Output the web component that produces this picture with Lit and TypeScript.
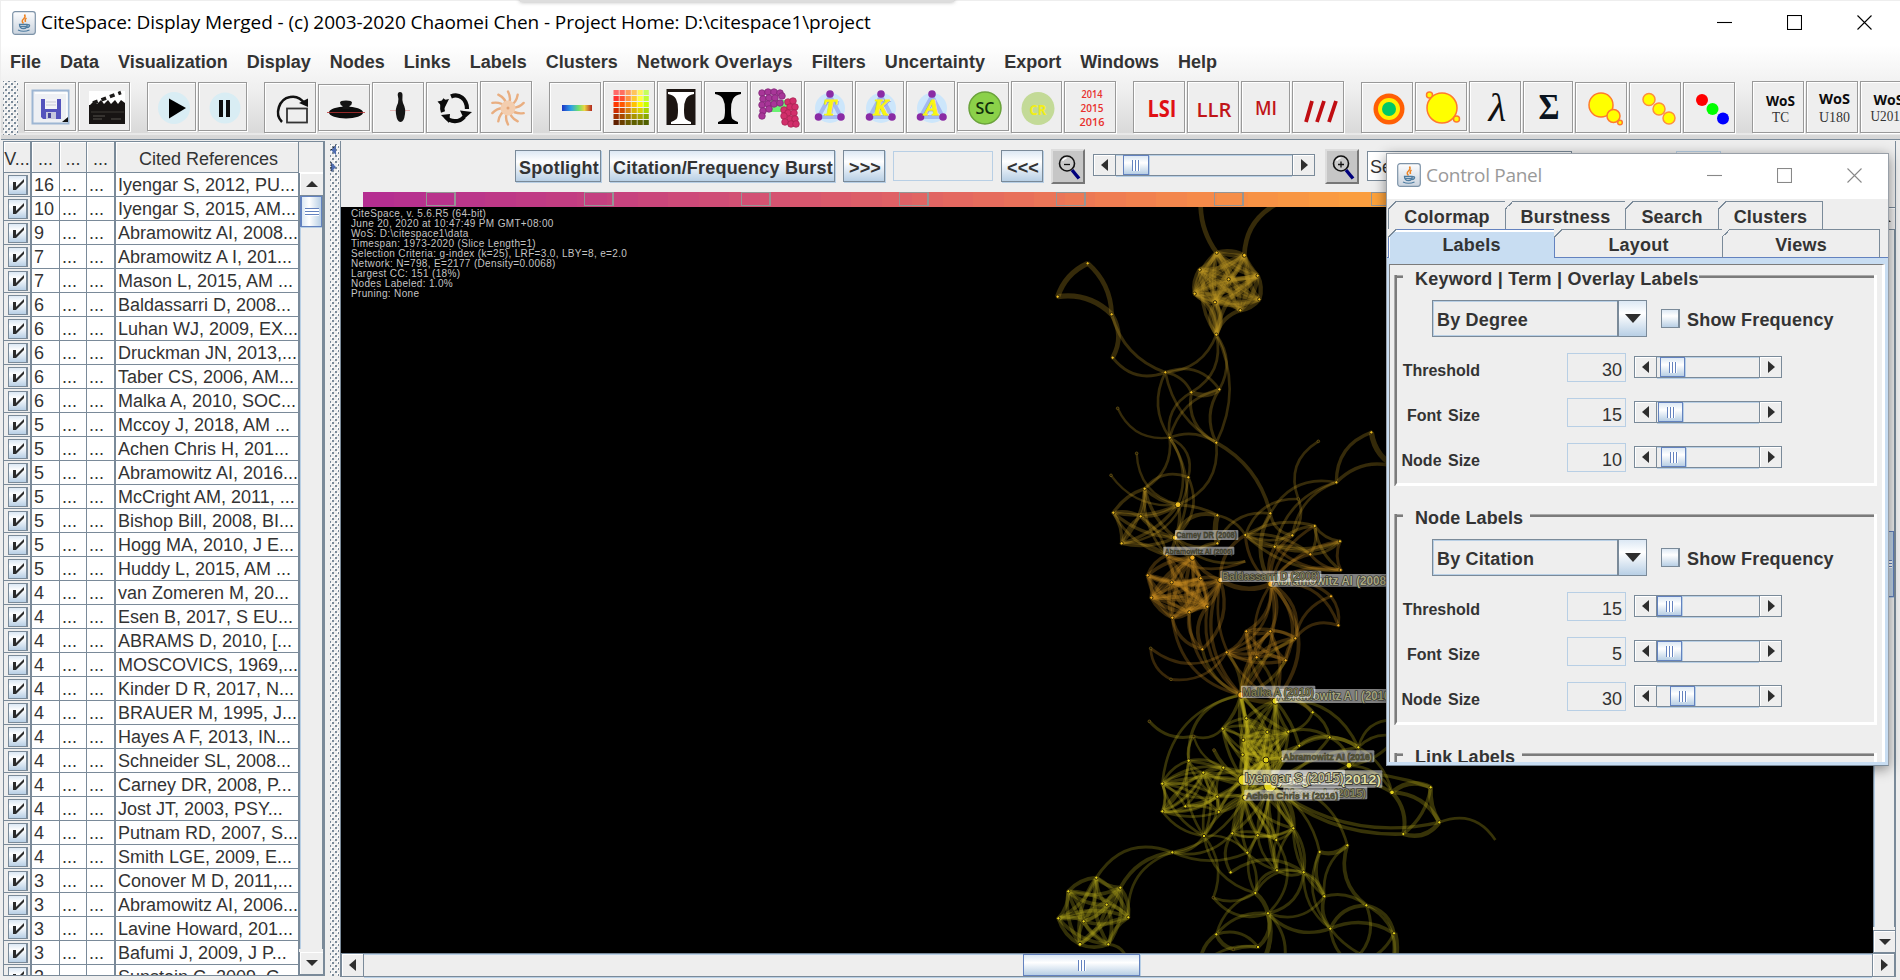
import { LitElement, html, svg, css } from "lit";
import { customElement } from "lit/decorators.js";

const MENUS = ["File", "Data", "Visualization", "Display", "Nodes", "Links", "Labels", "Clusters", "Network Overlays", "Filters", "Uncertainty", "Export", "Windows", "Help"];

const REFS: [number, string][] = [
  [16, "Iyengar S, 2012, PU..."], [10, "Iyengar S, 2015, AM..."], [9, "Abramowitz AI, 2008..."],
  [7, "Abramowitz A I, 201..."], [7, "Mason L, 2015, AM ..."], [6, "Baldassarri D, 2008..."],
  [6, "Luhan WJ, 2009, EX..."], [6, "Druckman JN, 2013,..."], [6, "Taber CS, 2006, AM..."],
  [6, "Malka A, 2010, SOC..."], [5, "Mccoy J, 2018, AM ..."], [5, "Achen Chris H, 201..."],
  [5, "Abramowitz AI, 2016..."], [5, "McCright AM, 2011, ..."], [5, "Bishop Bill, 2008, BI..."],
  [5, "Hogg MA, 2010, J E..."], [5, "Huddy L, 2015, AM ..."], [4, "van Zomeren M, 20..."],
  [4, "Esen B, 2017, S EU..."], [4, "ABRAMS D, 2010, [..."], [4, "MOSCOVICS, 1969,..."],
  [4, "Kinder D R, 2017, N..."], [4, "BRAUER M, 1995, J..."], [4, "Hayes A F, 2013, IN..."],
  [4, "Schneider SL, 2008..."], [4, "Carney DR, 2008, P..."], [4, "Jost JT, 2003, PSY..."],
  [4, "Putnam RD, 2007, S..."], [4, "Smith LGE, 2009, E..."], [3, "Conover M D, 2011,..."],
  [3, "Abramowitz AI, 2006..."], [3, "Lavine Howard, 201..."], [3, "Bafumi J, 2009, J P..."],
  [3, "Sunstein C, 2009, G..."],
];

const INFO = ["CiteSpace, v. 5.6.R5 (64-bit)", "June 20, 2020 at 10:47:49 PM GMT+08:00", "WoS: D:\\citespace1\\data",
  "Timespan: 1973-2020 (Slice Length=1)", "Selection Criteria: g-index (k=25), LRF=3.0, LBY=8, e=2.0",
  "Network: N=798, E=2177 (Density=0.0068)", "Largest CC: 151 (18%)", "Nodes Labeled: 1.0%", "Pruning: None"];

/* ---------- network data ---------- */
type P = [number, number, number?];
const N: Record<string, P> = {
  p0: [560, 158], p1: [643, 166, 5], p2: [509, 209], p3: [683, 227], p4: [596, 238], p5: [494, 281], p6: [555, 307], p7: [688, 298], p8: [631, 331], p9: [559, 404],
  q0: [512, 0, 0], q1: [740, 12, 0],
  a0: [173, 190], a1: [83, 290], a2: [245, 343], a3: [248, 473], a4: [406, 517],
  b1: [484, 577], b2: [568, 568], b3: [419, 713, 4], b4: [559, 728], b5: [263, 625, 2], b6: [320, 760, 2], b7: [243, 826, 2], b8: [475, 832],
  c0: [344, 866], c1: [444, 914, 8], c2: [250, 938], c3: [332, 949], c4: [562, 946], c5: [275, 1030], c6: [435, 1013, 7], c7: [562, 1030],
  d0: [721, 940], d1: [805, 897, 2], d2: [865, 724, 2], d3: [919, 847], d4: [1024, 697], d5: [1110, 805], d6: [787, 1006], d7: [854, 978], d8: [930, 1024], d9: [646, 1005], d10: [734, 1040], d11: [841, 1063], d12: [932, 1110],
  e0: [353, 1126], e1: [425, 1147], e2: [364, 1193], e3: [487, 1073, 7], e4: [512, 1135], e5: [571, 1140, 7], e6: [532, 1220], e7: [478, 1237], e8: [427, 1253], e9: [517, 1348], e10: [410, 1066], e11: [646, 1084, 0],
  f0: [723, 1152, 9], f1: [903, 1189], f2: [925, 1276], f3: [796, 1315], f4: [649, 1294], f5: [721, 1294], f6: [590, 1357], f7: [680, 1372], f8: [767, 1381], f9: [362, 1345, 2], f10: [423, 1438, 2],
  g0: [633, 1485, 9], g1: [736, 1503, 9],
  h0: [649, 1555], h1: [578, 1586], h2: [712, 1596], h3: [775, 1595], h4: [848, 1537], h5: [640, 1620], h6: [638, 1664], h7: [708, 1680, 8], h8: [808, 1637], h9: [899, 1612], h10: [985, 1642], h11: [957, 1696, 8], h12: [757, 1677],
  i0: [491, 1609, 2], i1: [358, 1564, 2], i2: [552, 1650, 2], i3: [476, 1682], i4: [520, 1718], i5: [580, 1703], i6: [397, 1751], i7: [466, 1819], i8: [562, 1790], i9: [397, 1834], i10: [566, 1836], i11: [522, 1908],
  j0: [640, 1740, 15], j1: [720, 1757, 18], j2: [645, 1793, 7], j3: [607, 1900], j4: [683, 1906], j5: [790, 1885], j6: [739, 1920], j7: [652, 1958], j8: [741, 2011], j9: [821, 2017], j10: [602, 2017], j11: [550, 2093, 2], j12: [676, 2079], j13: [714, 2140],
  k0: [869, 1956], k1: [952, 1936], k2: [883, 2089], k3: [901, 2186], k4: [1009, 2116], k5: [1092, 2200], k6: [559, 2203], k7: [684, 2241], k8: [427, 1957], k9: [610, 2248, 2], k10: [1090, 2290, 0], k11: [960, 2290, 0], k12: [510, 2300, 0], k13: [760, 2300, 0], k14: [690, 2300, 0],
  l0: [199, 2033], l1: [115, 2074], l2: [271, 2063], l3: [230, 2114], l4: [85, 2155], l5: [161, 2164], l6: [295, 2152], l7: [150, 2233, 5], l8: [235, 2233], l9: [290, 2275, 0],
  m0: [1086, 1777, 6], m1: [1202, 1762], m2: [1228, 1867], m3: [1120, 1902], m4: [1396, 1920, 0], m5: [1100, 1560, 0], m6: [1100, 1610, 0],
};

type E = [string, string, number, number];
const EDGES: E[] = [
  ["q0", "p0", .12, 14], ["q1", "p1", .2, 14],
  ["a1", "a0", -.15, 16], ["a0", "a2", -.15, 14], ["a1", "a2", -.17, 16], ["a2", "a3", -.2, 14], ["a2", "a4", .18, 9], ["a3", "a4", .25, 9],
  ["p9", "a4", -.22, 8], ["p9", "b1", -.25, 8], ["p9", "b2", -.22, 8], ["p9", "b4", -.17, 8],
  ["a4", "b1", -.18, 8], ["a4", "b2", -.26, 8], ["a4", "b3", .2, 8], ["a4", "b4", .16, 8], ["b1", "b2", .2, 14], ["b1", "b4", .25, 9], ["b2", "b4", .2, 9], ["b3", "b2", -.2, 8], ["b3", "b1", -.24, 8], ["b3", "b4", -.18, 8],
  ["b5", "b3", .25, 7], ["b3", "c0", -.22, 8], ["b3", "b8", -.28, 8], ["b3", "c1", -.18, 8], ["b3", "c6", -.2, 8], ["b4", "c1", -.26, 8], ["b4", "d0", -.15, 11],
  ["b6", "c1", .25, 7], ["b7", "c1", .2, 7], ["b8", "c0", .25, 8], ["b8", "c6", -.25, 8], ["b8", "c5", -.28, 7],
  ["c1", "c4", -.08, 9], ["c6", "c4", -.3, 12], ["c4", "c7", .1, 16], ["c6", "c7", .2, 8], ["c4", "d9", -.15, 8], ["c6", "e3", .2, 9], ["c7", "e3", .2, 9],
  ["d0", "d3", -.25, 8], ["d0", "d6", .25, 9], ["d0", "d9", -.2, 8], ["d0", "f0", .2, 12], ["d0", "c7", .25, 8], ["d1", "d2", -.28, 8], ["d1", "d6", -.2, 8], ["d1", "d9", .25, 8], ["d3", "d4", -.24, 10], ["d3", "d5", -.22, 10], ["d4", "d5", .2, 16], ["d3", "d6", .2, 8], ["d3", "d10", .2, 8],
  ["d9", "d6", .15, 8], ["d6", "f0", .2, 10], ["d9", "e5", .2, 10], ["e10", "e11", .18, 8], ["c6", "e11", .2, 8], ["e5", "f0", .18, 14],
  ["f0", "f1", -.2, 10], ["f0", "f2", -.28, 9], ["f1", "f2", -.15, 9], ["f3", "f1", -.2, 9], ["f3", "f2", -.25, 9], ["f0", "f3", -.25, 10], ["f0", "f4", -.22, 10], ["f0", "f5", -.18, 10], ["f0", "f8", -.24, 10], ["f0", "f6", -.25, 8], ["f0", "g0", -.18, 10], ["f0", "g1", -.3, 11], ["f0", "f7", .15, 8],
  ["e5", "g0", .22, 10], ["e5", "e9", -.22, 10], ["e8", "e9", .22, 10], ["e7", "e9", .2, 10], ["e6", "e9", .22, 11], ["e8", "g0", .24, 9], ["e7", "g0", .22, 9], ["e6", "g0", .2, 9], ["e9", "g0", .18, 9], ["e5", "g1", .24, 8],
  ["f9", "f10", .2, 8], ["f9", "f6", .24, 8], ["f10", "f6", .22, 8],
  ["i1", "i0", .2, 9], ["i0", "h1", .22, 8], ["i0", "i3", .15, 8], ["g0", "i3", .3, 9], ["g0", "i6", .25, 8], ["i0", "i5", .18, 7], ["i2", "j0", .12, 11],
  ["g1", "h4", -.22, 12], ["h4", "h9", -.15, 9], ["h4", "g0", .22, 9], ["g1", "h10", -.25, 9], ["h9", "h10", -.1, 12], ["h8", "h9", -.18, 11], ["h8", "h10", -.22, 11], ["h3", "h9", -.15, 9], ["h3", "h4", .2, 8], ["h10", "m5", -.28, 8], ["h10", "m6", -.2, 8], ["h10", "h11", -.2, 10], ["h11", "m6", .15, 9], ["h11", "m0", -.2, 8], ["h11", "h9", .2, 9], ["h11", "h12", .15, 11],
  ["j1", "m0", -.17, 10], ["j1", "m1", -.12, 10], ["m0", "m1", -.22, 14], ["m0", "m2", -.2, 12], ["m0", "m3", -.18, 12], ["m1", "m2", .12, 14], ["m1", "m3", -.14, 10], ["m3", "m2", .24, 13], ["m2", "m4", -.28, 8], ["j1", "m3", .14, 11], ["j1", "m2", .16, 10], ["h10", "m0", -.15, 8],
  ["j1", "k0", -.16, 8], ["j1", "k1", -.26, 8], ["j1", "j5", -.22, 13], ["j5", "k2", .16, 8], ["j5", "j9", -.15, 9],
  ["k0", "k1", .2, 13], ["k0", "k2", .18, 11], ["k1", "k2", .2, 8], ["k1", "k4", .24, 11], ["k2", "k4", -.18, 9], ["k2", "k3", .18, 11], ["k0", "k3", .22, 8], ["k3", "k4", -.22, 11], ["k4", "k5", -.22, 11], ["k3", "k5", -.18, 11], ["k5", "k10", -.1, 20], ["k4", "k10", -.26, 8], ["k3", "k10", .15, 8], ["k3", "k11", .15, 9], ["k4", "k11", -.26, 9], ["k5", "k11", -.2, 9], ["j9", "k2", -.18, 8], ["j9", "k3", .18, 8],
  ["j8", "k2", -.26, 8], ["j8", "j9", .2, 9], ["j9", "j13", -.25, 9], ["j8", "j12", .24, 8], ["j12", "j13", -.12, 13], ["j13", "k3", .22, 10], ["j13", "k2", .26, 8], ["j13", "k6", .18, 9], ["j13", "k7", -.22, 12], ["j13", "k13", -.2, 9], ["j13", "k14", -.15, 14], ["k6", "k7", -.24, 9], ["k6", "k9", .18, 12], ["k9", "k7", -.08, 10], ["k6", "k12", .18, 11], ["k7", "k12", .18, 8], ["j12", "j11", -.18, 8], ["j11", "j13", .24, 9], ["j10", "j9", -.24, 10], ["j10", "j3", -.22, 9], ["j11", "i11", .2, 8], ["j12", "j7", .15, 8], ["j12", "k6", .18, 8], ["j12", "j9", -.26, 8], ["j4", "j12", .2, 8], ["j6", "j13", -.28, 8],
  ["i11", "k8", -.2, 9], ["k8", "l0", .28, 9], ["k8", "l2", .18, 11], ["k8", "l6", .26, 8], ["j3", "k8", -.2, 8], ["j7", "k8", -.15, 8], ["j2", "k8", -.16, 8], ["i11", "j12", .22, 8], ["l8", "l9", -.22, 9], ["i11", "j7", -.18, 7],
];

/** Adds an arc between every pair of the listed nodes. */
function clique(ids: string, w: number, bend = .17) {
  const a = ids.split(" ");
  a.forEach((p, i) => a.slice(i + 1).forEach((q, j) => EDGES.push([p, q, (i + j) % 3 === 1 ? -bend : bend, w])));
}
/** Adds arcs from one hub to each listed node. */
function fan(hub: string, ids: string, w: number, bend = .15) {
  ids.split(" ").forEach((q, i) => EDGES.push([hub, q, i % 2 ? -bend : bend, w]));
}
clique("p1 p0 p2 p5 p6 p8 p7 p3 p4", 13, .13);
clique("p4 p1 p6 p3 p5 p0", 12, .05);
fan("p9", "p5 p8 p6 p4 p2 p3", 12, .18);
fan("p9", "p5 p6 p6 p0", 10, .24);
clique("c0 c2 c5 c6 c1 c3", 10, .12);
fan("e10", "c5 c2 c3 c0", 8);
clique("e0 e1 e2 e8 e7 e6 e5 e4 e3", 11, .12);
clique("e3 e1 e7 e4 e2 e6", 9, .05);
fan("e10", "e0 e1 e3 e4 e6 e7 c6", 10);
clique("d9 d10 d7 d8 d12 d11 f0", 9, .15);
clique("f4 f5 f3 f8 f7 f6", 10, .14);
fan("g0", "f4 f5 f6 f7 f8 f3", 10, .14);
fan("g1", "f5 f8 f7 f4", 9, .14);
EDGES.push(["g0", "g1", .12, 14]);
clique("h0 h1 h5 h6 h7 h2 h3", 8, .14);
clique("h7 j0 j1 j2 h6 h12 h2 h5", 9, .1);
fan("g0", "h0 h1 h5 h6 h7 j0 j1 h2 h3", 10, .08);
fan("g1", "h0 h2 h3 h7 h5 h8 j0 j1 h12", 10, .08);
clique("i3 i6 i9 i11 i8 i5 i4", 8, .15);
clique("i7 i4 i10 i8 i6 i9", 8, .12);
fan("j0", "h0 h1 h5 h6 h7 h2 i3 i4 i5 i8 i10 i7 i6 j3 j4 j5 j6 h8 h3", 9, .08);
fan("j1", "h0 h1 h5 h6 h7 h2 h3 h8 h9 h10 h11 h12 i5 i8 i10 i4 j2 j3 j4 j5 j6 j7 j8 j9", 9, .09);
fan("j2", "i11 i10 i8 j3 j4 j6 j5 j8 j7 h6 h7", 9, .12);
fan("h7", "j3 j4 j5 j6 h8 h12 i10 i4 h0 h3", 9, .12);
clique("j3 j4 j6 j5 j8", 8, .14);
clique("l0 l1 l4 l7 l8 l6 l2 l3 l5", 11, .14);

function tone(y: number): string {
  if (y < 900) return "#c79f24";
  if (y < 1060) return "#d0a124";
  if (y < 1400) return "#cf8f20";
  if (y < 1520) return "#c9a01e";
  if (y < 1950) return "#cbbd1e";
  return "#bdb31c";
}
const arc = ([a, b, k, w]: E) => {
  const [x1, y1] = N[a], [x2, y2] = N[b];
  const c = k * 1.45;
  const cx = (x1 + x2) / 2 - (y2 - y1) * c, cy = (y1 + y2) / 2 + (x2 - x1) * c;
  return svg`<path d="M${x1} ${y1}Q${cx} ${cy} ${x2} ${y2}" stroke=${tone((y1 + y2) / 2)} stroke-width=${w}></path>`;
};
const dot = (p: P) => {
  const r = p[2] ?? 4;
  if (!r) return null;
  const c = p[1] > 1500 ? "#e3d41b" : p[1] > 1040 ? "#f0ab20" : "#edbd22";
  return r > 3
    ? svg`<circle cx=${p[0]} cy=${p[1]} r=${r + 1} fill=${c} stroke="#2a2106" stroke-width="3"></circle>`
    : svg`<circle cx=${p[0]} cy=${p[1]} r="4" fill="#221b05" stroke="#776018" stroke-width="2"></circle>`;
};
/* text, x, y, width, height, font size, fill, outline */
type L = [string, number, number, number, number, number, string, number];
const LABELS: L[] = [
  ["Carney DR (2008)", 435, 990, 190, 30, 26, "#45442e", 1],
  ["Abramowitz AI (2006)", 400, 1040, 213, 24, 24, "#45442e", 1],
  ["Abramowitz AI (2008)", 722, 1122, 362, 38, 36, "#aba782", 3.5],
  ["Baldassarri D (2008)", 571, 1112, 303, 34, 32, "#807c5a", 3.5],
  ["Abramowitz A I (2010)", 736, 1467, 360, 42, 36, "#a3a37e", 3.5],
  ["Malka A (2010)", 633, 1457, 223, 37, 34, "#7d7a50", 3.5],
  ["Abramowitz AI (2016)", 755, 1651, 278, 36, 29, "#525033", 1.5],
  ["Mason L (2015)", 760, 1760, 252, 38, 33, "#88845a", 3],
  ["Iyengar S (2012)", 724, 1711, 333, 52, 41, "#dfdca4", 4],
  ["Iyengar S (2015)", 640, 1709, 305, 46, 37, "#c0bd92", 4],
  ["Achen Chris H (2016)", 643, 1769, 286, 33, 29, "#525033", 1.5],
];
const label = ([t, x, y, w, h, f, c, o]: L) => svg`
  <rect x=${x} y=${y} width=${w} height=${h} fill="#fff" fill-opacity=".5" rx="3"></rect>
  <text x=${x + 4} y=${y + h / 2 + f * .36} font-size=${f} textLength=${w - 8} lengthAdjust="spacingAndGlyphs" fill=${c} stroke="#2b2b24" stroke-width=${o} paint-order="stroke">${t}</text>`;

/* ---------- toolbar icons, all on a 48 x 48 grid ---------- */
const txt = (s: string, y: number, size: number, fill: string, fam = "Open Sans", weight = 400, w = 0) =>
  w ? svg`<text x="24" y=${y} text-anchor="middle" font-family=${fam} font-weight=${weight} font-size=${size} fill=${fill} textLength=${w} lengthAdjust="spacingAndGlyphs">${s}</text>`
    : svg`<text x="24" y=${y} text-anchor="middle" font-family=${fam} font-weight=${weight} font-size=${size} fill=${fill}>${s}</text>`;
const atom = (s: string) => svg`
  <circle cx="24" cy="25" r="15" fill="#cce6fb"></circle>
  <path d="M24 13 12.500 34H35z" fill="none" stroke="#a3b8f2" stroke-width="4" stroke-linejoin="round"></path>
  <circle cx="24" cy="11" r="3.800" fill="#8a2ba5"></circle><circle cx="12.500" cy="34" r="3.800" fill="#8a2ba5"></circle><circle cx="35" cy="34" r="3.800" fill="#8a2ba5"></circle>
  <text x="25" y="33" text-anchor="middle" font-family="Liberation Serif" font-style="italic" font-weight="700" font-size="23" fill="#8f98c4">${s}</text>
  <text x="24" y="32" text-anchor="middle" font-family="Liberation Serif" font-style="italic" font-weight="700" font-size="23" fill="#fbf611" stroke="#fbf611" stroke-width=".8">${s}</text>`;
const goblet = (c: string) => svg`<path d="M11 9H37V11Q31 12 29 16Q26.500 21 27 27Q27 34 28.500 36Q31 38 34 39V41H14V39Q17 38 19.500 36Q21 34 21 27Q21.500 21 19 16Q17 12 11 11z" fill=${c}></path>`;
const gridCols = ["#ff6a6a #ff7060 #ff9c5c #ffc45c #fff45c #c4ff5c", "#ff3030 #ff5030 #ff9040 #ffc830 #ffff40 #c0ff30", "#ff3800 #ff5800 #ff8c10 #ffc400 #fff800 #c4ff00", "#cc2c00 #d04800 #d48010 #d8b400 #d8d000 #a8d400", "#a03000 #a84a00 #a87400 #a89400 #a8a800 #88a800", "#602000 #6c4000 #685800 #606000 #606400 #506000"].map((r) => r.split(" "));
const purple = [[8, 10], [14, 9], [20, 9], [9, 16], [15, 15], [21, 15], [8, 22], [14, 21], [9, 28], [20, 21], [15, 26], [26, 10], [28, 13], [26, 20], [8, 33]];
const crimson = [[34, 19], [39, 18], [30, 27], [36, 24], [41, 24], [34, 30], [40, 30], [30, 33], [36, 36], [41, 36], [31, 39], [37, 41], [42, 41]];

const ICONS: Record<string, unknown> = {
  save: svg`<rect x="6.500" y="7.500" width="36" height="33" fill="#eef0f4" stroke="#9db6d3" stroke-width="2"></rect><path d="M9 10h32v29" fill="none" stroke="#fff" stroke-width="1.500"></path>
    <path d="M15 16H35V36H17L15 34z" fill="#5453bd"></path><rect x="19" y="16" width="12" height="10" fill="#f4f4f7"></rect><path d="M20 19h10M20 22h10" stroke="#c9c9d4"></path><rect x="20" y="29" width="10" height="7" fill="#c6c7dd"></rect><rect x="22" y="30" width="3" height="5" fill="#45459c"></rect><path d="M42 34v5h-6z" fill="#111"></path>`,
  clap: svg`<rect x="7" y="8" width="36" height="16" fill="#fff"></rect><path d="M8 22 12 18l3 3 4-4 3 4 4-4 3 4 4-4 3 4 3-4 4 3V41H7V22z" fill="#171413"></path><path d="M11 20 39 9.500" stroke="#1c1a19" stroke-width="3.500" stroke-dasharray="5 4"></path><path d="M9 29H42" stroke="#3d3835" stroke-width="1"></path><path d="M11 33h12M11 36h9M29 36h10" stroke="#55504c"></path>`,
  play: svg`<circle cx="25" cy="25" r="16" fill="#d9edf4"></circle><path d="M20 15.500 37 25 20 35.500z" fill="#000"></path>`,
  pause: svg`<circle cx="25" cy="25" r="15.500" fill="#d9edf4"></circle><path d="M21 17v17M28 17v17" stroke="#0c0c0c" stroke-width="4"></path>`,
  rotate: svg`<path d="M14 38C6 30 11 15 22 13Q31 11 37 20" fill="none" stroke="#111" stroke-width="2.500"></path><path d="M31 19 40 14.500V23z" fill="#111"></path><rect x="19" y="24.500" width="20" height="14" fill="#eee" stroke="#333" stroke-width="1.800"></rect>`,
  disc: svg`<ellipse cx="24" cy="28.500" rx="17" ry="6" fill="#0c0c0c"></ellipse><path d="M18 18.500Q18 16.500 24 16.500T30 18.500Q30 21 27.500 22V25H20.500V22Q18 21 18 18.500z" fill="#151515"></path><path d="M5 28.500H43" stroke="#b93030" stroke-width=".8"></path>`,
  pin: svg`<path d="M14 26.500H34" stroke="#e3aaaa" stroke-width=".8"></path><path d="M24 8Q26.500 8 26.500 11Q26 16 27 19Q30 25 29 30Q28 38 24.500 38T20 30Q19 25 22 19Q23 15 21.700 11Q21.700 8 24 8z" fill="#151515"></path>`,
  refresh: svg`<path d="M21 12.500C29 9 37 15 37 25M34 33C29 39 20 38 16 33M13 28C11 22 13 18 15 15.500" fill="none" stroke="#0b0b0b" stroke-width="4.200"></path><path d="M7.500 17.500 19 15 14 25zM30 26.500 42 28 34 35zM19 39l-8-8 9-1z" fill="#0b0b0b"></path>`,
  star: svg`<g fill="none" stroke="#e9ae80" stroke-width="2.400" stroke-linecap="round">${[0, 36, 72, 108, 144, 180, 216, 252, 288, 324].map((a) => svg`<path transform="rotate(${a} 24 25)" d="M24 23Q28 16 24 8.500"></path>`)}</g><circle cx="24" cy="25" r="7.500" fill="#f3cdae"></circle><circle cx="24" cy="25" r="1.500" fill="#e4a373"></circle>`,
  rainbow: svg`<defs><linearGradient id="rb"><stop offset="0" stop-color="#1d35c4"></stop><stop offset=".3" stop-color="#2e9fe8"></stop><stop offset=".55" stop-color="#6ee06c"></stop><stop offset=".75" stop-color="#ecd441"></stop><stop offset="1" stop-color="#b3241d"></stop></linearGradient></defs><rect x="9" y="22" width="30" height="6" fill="url(#rb)"></rect>`,
  grid: svg`<g>${gridCols.map((r, y) => r.map((c, x) => svg`<rect x=${6.5 + x * 6} y=${7 + y * 6} width="5.300" height="5" fill=${c}></rect>`))}</g>`,
  gobw: svg`<rect x="9.500" y="6" width="29" height="36" fill="#1c1512"></rect>${goblet("#fff")}`,
  gobb: goblet("#000"),
  blob: svg`<rect x="17" y="17" width="16" height="12" fill="#6af273"></rect>
    <g fill="#a83698" stroke="#7d2272" stroke-width=".7">${purple.map(([x, y]) => svg`<circle cx=${x} cy=${y} r="3.300"></circle>`)}</g>
    <g fill="#d22f6b" stroke="#a5204f" stroke-width=".7">${crimson.map(([x, y]) => svg`<circle cx=${x} cy=${y} r="3.300"></circle>`)}</g>`,
  T: atom("T"), K: atom("K"), A: atom("A"),
  sc: svg`<circle cx="24" cy="25" r="16" fill="#8bd149" stroke="#6aa23b" stroke-width="1.500"></circle>${txt("SC", 31, 17, "#10300a", "Open Sans", 600, 19)}`,
  cr: svg`<circle cx="24" cy="25.500" r="16.500" fill="#c3da97"></circle>${txt("CR", 32, 15, "#f2ee16", "Open Sans", 700, 17)}`,
  years: svg`${txt("2014", 15, 10.5, "#e8302c", "Open Sans", 600, 21)}${txt("2015", 29, 10.5, "#e8302c", "Open Sans", 600, 23)}${txt("2016", 43, 11, "#e8302c", "Open Sans", 600, 25)}`,
  lsi: svg`<g transform="translate(3 0)">${txt("LSI", 34, 23, "#e01014", "Open Sans", 700, 29)}</g>`,
  llr: svg`<g transform="translate(1 0)">${txt("LLR", 34, 20, "#c01518", "Open Sans", 600, 35)}</g>`,
  mi: txt("MI", 32, 19, "#c01518", "Open Sans", 600, 22),
  slashes: svg`<path d="M12 39 18 18M23 39 30 18M35 39 42 18" stroke="#c00d12" stroke-width="3.800"></path>`,
  rings: svg`<circle cx="24" cy="25" r="15.500" fill="#ff5f05"></circle><circle cx="24" cy="25" r="11" fill="#fff100"></circle><circle cx="24" cy="25" r="7" fill="#00c865"></circle>`,
  sun: svg`<g fill="#ff0" stroke="#ff7a2c" stroke-width="1.500"><circle cx="10.500" cy="12" r="3"></circle><circle cx="23" cy="25" r="15"></circle><circle cx="37.500" cy="36" r="3"></circle></g>`,
  lambda: svg`<text x="24.500" y="38" text-anchor="middle" font-family="Liberation Serif" font-style="italic" font-size="41" fill="#111">λ</text>`,
  sigma: svg`<text x="23" y="36" text-anchor="middle" font-family="Liberation Serif" font-weight="700" font-size="35" textLength="21" lengthAdjust="spacingAndGlyphs" fill="#0b1520">Σ</text>`,
  big: svg`<g fill="#ff0" stroke="#ff7a2c" stroke-width="1.500"><circle cx="22" cy="21" r="12"></circle><circle cx="34.500" cy="32" r="6.500"></circle><circle cx="41" cy="38.500" r="2.300"></circle></g>`,
  chain: svg`<g fill="#ff0" stroke="#ff8e3c" stroke-width="1.500"><circle cx="16" cy="15.500" r="6"></circle><circle cx="26" cy="25" r="6"></circle><circle cx="36" cy="34" r="6"></circle></g>`,
  rgb: svg`<circle cx="15" cy="16" r="6" fill="red"></circle><circle cx="25.500" cy="25" r="6" fill="#0f0"></circle><circle cx="36" cy="34.500" r="6" fill="#00f"></circle>`,
  w1: svg`<g transform="translate(2.500 0)">${txt("WoS", 23, 14, "#0c0c0c", "Open Sans", 700, 29)}${txt("TC", 39, 14, "#333", "Liberation Serif", 400, 17)}</g>`,
  w2: svg`<g transform="translate(2.500 0)">${txt("WoS", 21, 15, "#0c0c0c", "Open Sans", 700, 31)}${txt("U180", 39, 15, "#333", "Liberation Serif", 400, 31)}</g>`,
  w3: svg`<g transform="translate(2.500 0)">${txt("WoS", 22, 15, "#0c0c0c", "Open Sans", 700, 30)}${txt("U2013", 38, 15, "#333", "Liberation Serif", 400, 36)}</g>`,
};

/* icon name and button size variant for each toolbar group */
const GROUPS: [string, string][][] = [
  [["save", "s"], ["clap", "s k"]],
  [["play", "s n49 k"], ["pause", "s n49 k"]],
  [["rotate", "m k"], ["disc", "d k"], ["pin", "m k"], ["refresh", "m k"], ["star", "k"]],
  [["rainbow", "s k"], ["grid", "k"], ["gobw", "n45 k"], ["gobb", "n44 k"], ["blob", "k"], ["T", "n49 k"], ["K", "n49 k"], ["A", "n49 k"], ["sc", "s k"], ["cr", "n51 k"], ["years", "k"]],
  [["lsi", ""], ["llr", ""], ["mi", "n49"], ["slashes", ""]],
  [["rings", "m k"], ["sun", "s k"], ["lambda", "k"], ["sigma", "n50 k"], ["big", "m k"], ["chain", "m k"], ["rgb", "m k"]],
  [["w1", ""], ["w2", ""], ["w3", ""]],
];

const javaCup = html`<svg class="java" viewBox="0 0 24 24" preserveAspectRatio="none"><defs><linearGradient id="jg" x2="0" y2="1"><stop offset="0" stop-color="#fdfdfe"></stop><stop offset="1" stop-color="#c9d3de"></stop></linearGradient></defs>
  <rect x=".7" y=".7" width="22.600" height="22.600" rx="2.500" fill="url(#jg)" stroke="#7d93a8" stroke-width="1.200"></rect>
  <path d="M12.500 3.500Q14 6 11.500 8T11.500 12.500M14.500 7Q12.500 8.500 13.500 11" fill="none" stroke="#ee8322" stroke-width="1.500"></path>
  <path d="M7.500 13.500H15Q15.500 17.500 11.500 17.500T7.500 13.500zM15.200 13.800Q18 13.500 17.500 15T15 16.500" fill="none" stroke="#4c7ba0" stroke-width="1.300"></path><path d="M8 15.500H15M6 19Q11.500 21.500 17.500 19" stroke="#4c7ba0" stroke-width="1.200" fill="none"></path></svg>`;

const winButtons = html`<div class="wb"><svg viewBox="0 0 15 15"><path d="M0 7.500H15"></path></svg><svg viewBox="0 0 15 15"><rect x=".5" y=".5" width="14" height="14"></rect></svg><svg viewBox="0 0 15 15"><path d="M.5.500 14.500 14.500M14.500.500.500 14.500"></path></svg></div>`;

const tri: Record<string, string> = { l: "M8 0V12L1 6z", r: "M2 0V12L9 6z", u: "M0 8H12L6 2z", d: "M0 2H12L6 8z" };
const arrow = (d: string) => html`<span class="ab ${d}"><svg width=${"lr".includes(d) ? 10 : 12} height=${"lr".includes(d) ? 12 : 10}><path d=${tri[d]} fill="#2e2e2e"></path></svg></span>`;
const hbar = (cls: string, pos: number, size: number) => html`<div class="sb h ${cls}">${arrow("l")}<span class="track"><span class="thumb" style="margin-left:${pos}px;width:${size}px"><i></i></span></span>${arrow("r")}</div>`;
const vbar = (cls: string, pos: number, size: number) => html`<div class="sb v ${cls}">${arrow("u")}<span class="track"><span class="thumb" style="margin-top:${pos}px;height:${size}px"><i></i></span></span>${arrow("d")}</div>`;

const magnifier = (plus: boolean) => html`<span class="mag"><svg width="30" height="34" viewBox="0 0 30 34"><circle cx="14" cy="12.500" r="7.500" fill="#c9c9c9" stroke="#111" stroke-width="1.600"></circle><path d="M9.500 9.500Q11 7.500 13.500 7" stroke="#fff" fill="none" stroke-width="1.500"></path><path d="M11 13.500h6${plus ? "M14 10.500v6" : ""}" stroke="#111" stroke-width="1.300"></path><path d="M19 19 26 27.500" stroke="#00007c" stroke-width="3.500"></path></svg></span>`;

/* plasma-like ramp of the time slices */
const STOPS: [number, number[]][] = [[0, [181, 46, 145]], [7, [196, 64, 128]], [13, [213, 83, 113]], [20, [230, 108, 93]], [27, [245, 138, 74]], [34, [253, 166, 58]], [48, [240, 249, 33]]];
const ramp = (i: number) => {
  const k = STOPS.findIndex((s) => s[0] > i), [a, ca] = STOPS[k - 1], [b, cb] = STOPS[k];
  return `rgb(${ca.map((c, j) => Math.round(c + (cb[j] - c) * (i - a) / (b - a))).join(",")})`;
};

const scrollCss = css`
  .sb { display: flex; box-sizing: border-box; background: #eee; }
  .sb .ab { box-sizing: border-box; display: flex; align-items: center; justify-content: center; border: 1px solid #7a8a99; box-shadow: inset 1px 1px #fff; flex: none; }
  .track { flex: 1; display: flex; box-sizing: border-box; min-width: 0; min-height: 0; }
  .h .track { border-top: 1px solid #7a8a99; border-bottom: 1px solid #7a8a99; box-shadow: inset 0 1px #b8cfe5, 0 1px #b8cfe5; }
  .v .track { border-left: 1px solid #7a8a99; border-right: 1px solid #7a8a99; box-shadow: inset 1px 0 #b8cfe5; }
  .v { flex-direction: column; }
  .thumb { display: flex; align-items: center; justify-content: center; box-sizing: border-box; border: 1px solid #6382bf; flex: none; }
  .h .thumb { background: linear-gradient(#dce8f4, #fff 38%, #b8cfe5); box-shadow: 1px 0 #b8cfe5; }
  .v .thumb { background: linear-gradient(90deg, #dce8f4, #fff 38%, #b8cfe5); box-shadow: 0 1px #b8cfe5; border-left-width: 2px; width: 100%; }
  .h i { width: 8px; height: 11px; background: repeating-linear-gradient(90deg, #6382bf 0 1px, #fff 1px 3px); }
  .v i { height: 8px; width: 14px; background: repeating-linear-gradient(#6382bf 0 1px, #fff 1px 3px); }
`;

@customElement("control-group")
class ControlGroup extends LitElement {
  static properties = { heading: {}, mode: {}, rows: { attribute: false } };
  static styles = [scrollCss, css`
    :host { display: block; font: 18px "Liberation Sans", Arial, sans-serif; color: #333; height: 211px; box-sizing: border-box; border: 2px solid #7b7b7b; border-top: 0; border-right: 3px solid #fff; border-bottom: 3px solid #fff; box-shadow: -1px 0 #aaa; }
    b { white-space: pre; }
    .head { display: flex; height: 20px; align-items: flex-start; }
    .head i { height: 2px; background: #7b7b7b; border-top: 1px solid #aaa; width: 6px; }
    .head i:last-child { flex: 1; }
    .head b { padding: 0 0 0 12px; line-height: 20px; margin-top: -6px; letter-spacing: .22px; }
    .head.gap b { padding-right: 7px; letter-spacing: .1px; }
    .top { display: flex; align-items: center; margin: 5px 0 12px 35px; height: 37px; letter-spacing: .2px; }
    .combo { width: 215px; height: 37px; box-sizing: border-box; border: 1px solid #7a8a99; box-shadow: inset 1px 1px #b8cfe5, inset 0 -1px #b8cfe5; display: flex; align-items: center; margin-right: 14px; flex: none; }
    .combo b { flex: 1; padding: 3px 0 0 4px; }
    .top > b { padding-top: 3px; }
    .combo span { width: 29px; height: 100%; border-left: 2px solid #7a8a99; display: flex; align-items: center; justify-content: center; background: linear-gradient(#dce8f4, #fff 35%, #b8cfe5); box-sizing: border-box; }
    .cb { width: 19px; height: 19px; box-sizing: border-box; border: 1px solid #7a8a99; border-right-width: 2px; background: linear-gradient(#dce8f4, #fff 35%, #b8cfe5); margin-right: 7px; }
    .row { display: flex; height: 45px; align-items: flex-start; }
    .row > b { width: 83px; display: flex; justify-content: flex-end; font-size: 16px; word-spacing: 2px; line-height: 43px; margin-right: 87px; }
    .val { width: 59px; height: 29px; box-sizing: border-box; border: 1px solid #b8cfe5; text-align: right; padding-right: 3px; line-height: 32px; margin: 4px 8px 0 0; }
    .small { width: 148px; height: 22px; margin-top: 7px; }
    .small .ab { width: 23px; }
  `];
  declare heading: string;
  declare mode: string;
  declare rows: [string, number, number][];
  constructor() {
    super();
    this.heading = "";
    this.mode = "";
    this.rows = [];
  }
  render() {
    return html`<div class="head ${this.heading.length < 20 ? "gap" : ""}"><i></i><b>${this.heading}</b><i></i></div>
      <div class="top"><div class="combo"><b>${this.mode}</b><span><svg width="16" height="9"><path d="M0 0H16L8 9z" fill="#2e2e2e"></path></svg></span></div><span class="cb"></span><b>Show Frequency</b></div>
      ${this.rows.map(([n, v, p]) => html`<div class="row"><b>${n}</b><span class="val">${v}</span>${hbar("small", p, 25)}</div>`)}`;
  }
}

@customElement("app-root")
class AppRoot extends LitElement {
  static styles = [scrollCss, css`
    :host { display: flex; flex-direction: column; width: 1900px; height: 980px; position: relative; overflow: hidden; box-sizing: border-box; padding-left: 1px; background: #eee; color: #333; font: 18px "Liberation Sans", Arial, sans-serif; }
    b { font-weight: bold; }
    .title { height: 45px; flex: none; background: #fff; display: flex; align-items: center; padding: 0 28px 1px 11px; box-sizing: border-box; color: #000; border-top: 1px solid #eee; }
    .java { width: 24px; height: 24px; flex: none; }
    .title .t { font-family: "Open Sans", sans-serif; font-size: 19px; margin-left: 5px; letter-spacing: -.08px; flex: 1; white-space: pre; line-height: 24px; margin-top: -2px; }
    .tabline { position: absolute; left: 520px; top: -6px; width: 434px; height: 8px; box-shadow: 0 0 4px #aaa; background: #ddd; }
    .wb { display: flex; gap: 55px; }
    .wb svg { width: 15px; height: 15px; fill: none; stroke: currentColor; stroke-width: 1.1; }
    .chrome { background: linear-gradient(#fff, #eee 50%, #d6d6d6); flex: none; border-bottom: 1px solid #7a8a99; box-sizing: border-box; height: 95px; overflow: hidden; }
    .menu { display: flex; height: 36px; padding-left: 9px; gap: 19px; line-height: 35px; font-weight: bold; white-space: nowrap; }
    .menu :nth-child(9) { letter-spacing: .24px; }
    .menu :nth-child(11) { letter-spacing: .12px; }
    .tools { display: flex; align-items: flex-start; height: 52px; border-bottom: 2px solid #e8e8e8; }
    .grip { width: 15px; height: 54px; margin: 0 6px 0 2px; flex: none; }
    .dots { background-image: radial-gradient(circle, #7a8a99 .8px, transparent 1.1px), radial-gradient(circle, #7a8a99 .8px, transparent 1.1px), radial-gradient(circle, #fff 1px, transparent 1.4px), radial-gradient(circle, #fff 1px, transparent 1.4px); background-size: 6px 6px; background-position: 0 0, 3px 3px, -1px -1px, 2px 2px; background-color: #eee; }
    .g { display: flex; gap: 2px; margin-right: 17px; }
    .btn { width: 52px; height: 52px; flex: none; box-sizing: border-box; border: 1px solid #999; border-right-width: 1.500px; background: #eee; box-shadow: inset 1px 1px #fff, 1px 1px #fff; display: flex; align-items: center; justify-content: center; overflow: hidden; }
    .btn svg { width: 48px; height: 48px; flex: none; }
    .k { padding-left: 3px; }
    .s { height: 49px; margin-top: 1px; } .m { height: 51px; margin-top: 1px; } .d { height: 47px; margin-top: 3px; }
    .n44 { width: 44px; } .n45 { width: 45px; } .n49 { width: 49px; } .n50 { width: 50px; } .n51 { width: 51px; }
    .body { flex: 1; display: flex; min-height: 0; }
    .left { width: 322px; height: 835px; margin: 1px 0 0 2px; box-sizing: border-box; border: 1px solid #7a8a99; border-right-width: 2px; display: flex; flex: none; overflow: hidden; }
    .table { width: 295px; flex: none; }
    .tr { display: grid; grid-template-columns: 28px 28px 27px 29px 183px; height: 24px; background: #fff; white-space: nowrap; }
    .tr > * { box-sizing: border-box; border-right: 1px solid #7a8a99; border-bottom: 1px solid #7a8a99; padding-left: 2px; line-height: 25px; overflow: hidden; }
    .tr > :nth-child(1) { border-right-width: 2px; background: #eee; padding: 2px 0 0 4px; }
    .tr > :nth-child(4) { border-right-width: 2px; }
    .tr > :nth-child(5) { padding-left: 2px; }
    .hd { height: 31px; }
    .hd > *, .hd > :nth-child(1) { background: #eee; line-height: 34px; box-shadow: inset 1px 1px #fff; padding: 0; text-align: center; }
    .hd > :nth-child(5) { padding-left: 3px; }
    .ck { display: block; width: 20px; height: 20px; box-sizing: border-box; border: 1px solid #7a8a99; border-right-width: 2px; background: linear-gradient(#dce8f4, #fff 35%, #b8cfe5); }
    .ck svg { display: block; }
    .lsc { flex: 1; display: flex; flex-direction: column; }
    .lsc .sp { height: 31px; box-sizing: border-box; border-bottom: 1px solid #fff; }
    .lbar { flex: 1; }
    .lbar .ab { height: 23px; border-width: 0 0 1px 1px; }
    .divider { width: 15px; flex: none; display: flex; justify-content: center; padding-right: 1px; box-sizing: border-box; }
    .divider .dots { width: 9px; margin: 4px 0 4px 4px; }
    .divider svg { display: block; }
    .main { width: 1556px; flex: none; border-left: 1px solid #7a8a99; border-right: 1px solid #7a8a99; margin-top: 1px; display: flex; flex-direction: column; height: 836px; box-sizing: border-box; }
    .bar { height: 51px; display: flex; align-items: flex-start; padding: 9px 0 0 174px; box-sizing: border-box; flex: none; gap: 8px; }
    .jb { height: 32px; box-sizing: border-box; border: 1px solid #7a8a99; box-shadow: 1px 1px #b8cfe5; background: linear-gradient(#dce8f4, #fff 35%, #b8cfe5); font-weight: bold; line-height: 34px; text-align: center; white-space: nowrap; overflow: hidden; letter-spacing: .2px; flex: none; padding-left: 2px; }
    .w86 { width: 86px; } .w226 { width: 226px; } .w42 { width: 42px; }
    .inp { width: 100px; height: 30px; margin-top: 1px; border: 1px solid #b8cfe5; box-sizing: border-box; flex: none; }
    .inp.tiny { width: 45px; margin-left: 96px; }
    .mag { width: 34px; height: 35px; margin-top: -1px; background: #c6c6c6; box-sizing: border-box; border: 2px solid; border-color: #ddd #777 #777 #ddd; flex: none; display: flex; }
    .zoom { width: 222px; height: 22px; margin: 4px 2px 0 0; flex: none; }
    .zoom .ab { width: 23px; }
    .search { width: 205px; height: 30px; margin-top: 1px; border: 1px solid #7a8a99; background: #fff; box-sizing: border-box; padding-left: 2px; line-height: 31px; flex: none; }
    .slices { height: 15px; flex: none; display: flex; margin-left: 22px; position: relative; }
    .slices > i { width: 30.500px; flex: none; }
    .marks { position: absolute; inset: 0; display: flex; gap: 127.500px; padding-left: 63px; }
    .marks i { width: 30px; height: 14px; box-sizing: border-box; border: 1px solid #959595; border-right-width: 2px; flex: none; }
    .stage { flex: 1; display: flex; min-height: 0; }
    .canvas { width: 1532px; background: #000; overflow: hidden; flex: none; position: relative; }
    .canvas svg { display: block; }
    .info { position: absolute; left: 10px; top: 2px; font-size: 10px; line-height: 10px; color: #c4c4c4; white-space: pre; letter-spacing: .34px; }
    .net path { fill: none; stroke-opacity: .27; }
    .net text { font-weight: bold; }
    .vbar { flex: 1; } .vbar .ab { height: 23px; border-right: 0; }
    .hb { height: 24px; flex: none; } .hb .ab { width: 23px; }
    .cp { position: absolute; left: 1386px; top: 153px; width: 503px; height: 613px; box-sizing: border-box; border: 1px solid #99a0a8; border-bottom-color: #7a8a99; background: #eee; box-shadow: 0 3px 12px rgba(0,0,0,.45); display: flex; flex-direction: column; overflow: hidden; }
    .ct { height: 45px; flex: none; background: #fff; display: flex; align-items: center; padding: 0 26px 3px 10px; box-sizing: border-box; color: #999; }
    .ct .t { flex: 1; font-family: "Open Sans", sans-serif; font-size: 19px; margin-left: 5px; letter-spacing: -.3px; line-height: 24px; }
    .ct .wb { color: #888; }
    .tabs { display: flex; padding-left: 1px; height: 29px; flex: none; }
    .tabs.one { padding-top: 2px; height: 28px; }
    .tab { box-sizing: border-box; font-weight: bold; text-align: center; line-height: 30px; border-top: 1px solid #7a8a99; border-right: 1px solid #7a8a99; letter-spacing: .2px; position: relative; }
    .tab::before { content: ""; position: absolute; left: -1px; top: -1px; width: 9px; height: 9px; background: linear-gradient(135deg, #eee calc(50% - 1px), #7a8a99 calc(50% - 1px) 50%, transparent 50%); }
    .tab:first-child { border-left: 1px solid #7a8a99; }
    .tab.sel { background: #c8ddf2; border-color: #6382bf; box-shadow: inset 1px 2px #fff; }
    .t1 { width: 118px; } .t2 { width: 120px; } .t3 { width: 93px; } .t4 { width: 104px; }
    .r1 { width: 167px; } .r2 { width: 168px; } .r3 { width: 157px; }
    .pane { flex: 1; min-height: 0; overflow: hidden; border: 3px solid #c8ddf2; border-top: 6px solid #c8ddf2; border-left-width: 2px; box-shadow: 0 -1px #6382bf; display: flex; }
    .inner { flex: 1; border: 1px solid #7b7b7b; border-right: 3px solid #fff; border-bottom: 0; padding: 10px 5px 0 5px; display: flex; flex-direction: column; gap: 28px; overflow: hidden; }
    control-group { flex: none; }
  `];
  render() {
    return html`
      <div class="title">${javaCup}<span class="t">CiteSpace: Display Merged - (c) 2003-2020 Chaomei Chen - Project Home: D:\\citespace1\\project</span>${winButtons}</div>
      <div class="tabline"></div>
      <div class="chrome">
        <div class="menu">${MENUS.map((m) => html`<span>${m}</span>`)}</div>
        <div class="tools"><div class="grip dots"></div>
          ${GROUPS.map((g) => html`<div class="g">${g.map(([i, c]) => html`<span class="btn ${c}"><svg viewBox="0 0 48 48">${ICONS[i]}</svg></span>`)}</div>`)}
        </div>
      </div>
      <div class="body">
        <div class="left">
          <div class="table">
            <div class="tr hd"><span>V...</span><span>...</span><span>...</span><span>...</span><span>Cited References</span></div>
            ${REFS.map(([n, t]) => html`<div class="tr"><span><i class="ck"><svg width="17" height="18"><path d="M4 6H7V11L15 3V6L7 14H4z" fill="#2b2b2b"></path></svg></i></span><span>${n}</span><span>...</span><span>...</span><span>${t}</span></div>`)}
          </div>
          <div class="lsc"><div class="sp"></div>${vbar("lbar", 0, 31)}</div>
        </div>
        <div class="divider"><div class="dots"><svg width="8" height="30"><path d="M1 6 6 1V11zM1 18V28L6 23z" fill="#4f6db0"></path><path d="M1 6 6 1M1 18V28" stroke="#222" stroke-dasharray="1.500 1"></path></svg></div></div>
        <div class="main">
          <div class="bar">
            <span class="jb w86">Spotlight</span><span class="jb w226">Citation/Frequency Burst</span><span class="jb w42">&gt;&gt;&gt;</span><span class="inp"></span><span class="jb w42">&lt;&lt;&lt;</span>
            ${magnifier(false)}${hbar("zoom", 7, 26)}${magnifier(true)}<span class="search">Search</span><span class="inp tiny"></span>
          </div>
          <div class="slices">${Array.from({ length: 48 }, (_, i) => html`<i style="background:${ramp(i)}"></i>`)}<div class="marks">${Array.from({ length: 7 }, () => html`<i></i>`)}</div></div>
          <div class="stage">
            <div class="canvas">
              <svg class="net" width="1532" height="746" viewBox="0 0 1532 746"><g transform="translate(689 -7) scale(.33333)">
                ${EDGES.map(arc)}${Object.values(N).map(dot)}${LABELS.map(label)}
              </g></svg>
              <div class="info">${INFO.map((l) => html`<div>${l}</div>`)}</div>
            </div>
            ${vbar("vbar", 301, 66)}
          </div>
          ${hbar("hb", 659, 117)}
        </div>
      </div>
      <div class="cp">
        <div class="ct">${javaCup}<span class="t">Control Panel</span>${winButtons}</div>
        <div class="tabs one"><span class="tab t1">Colormap</span><span class="tab t2">Burstness</span><span class="tab t3">Search</span><span class="tab t4">Clusters</span></div>
        <div class="tabs"><span class="tab r1 sel">Labels</span><span class="tab r2">Layout</span><span class="tab r3">Views</span></div>
        <div class="pane"><div class="inner">
          <control-group heading="Keyword | Term | Overlay Labels" mode="By Degree" .rows=${[["Threshold", 30, 3], ["Font Size", 15, 1], ["Node Size", 10, 4]]}></control-group>
          <control-group heading="Node Labels" mode="By Citation" .rows=${[["Threshold", 15, 0], ["Font Size", 5, 0], ["Node Size", 30, 13]]}></control-group>
          <control-group heading="Link Labels" mode="By Citation" .rows=${[]}></control-group>
        </div></div>
      </div>`;
  }
}
